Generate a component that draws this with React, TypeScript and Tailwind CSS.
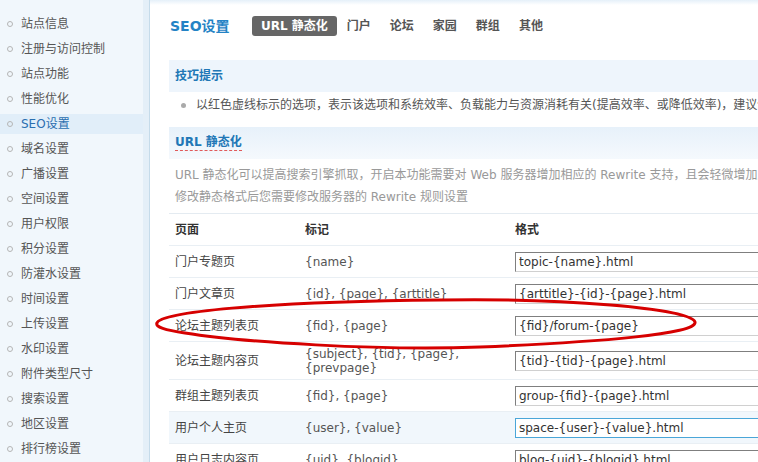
import React from "react";

const FONT = { fontFamily: '"DejaVu Sans", "Noto Sans CJK SC", sans-serif' };

const menu = [
  "站点信息",
  "注册与访问控制",
  "站点功能",
  "性能优化",
  "SEO设置",
  "域名设置",
  "广播设置",
  "空间设置",
  "用户权限",
  "积分设置",
  "防灌水设置",
  "时间设置",
  "上传设置",
  "水印设置",
  "附件类型尺寸",
  "搜索设置",
  "地区设置",
  "排行榜设置",
];

const tabs = ["门户", "论坛", "家园", "群组", "其他"];

interface Row {
  page: string;
  tags: string[];
  format: string;
  tall?: boolean;
  hover?: boolean;
}

const rows: Row[] = [
  { page: "门户专题页", tags: ["{name}"], format: "topic-{name}.html" },
  { page: "门户文章页", tags: ["{id}, {page}, {arttitle}"], format: "{arttitle}-{id}-{page}.html" },
  { page: "论坛主题列表页", tags: ["{fid}, {page}"], format: "{fid}/forum-{page}" },
  {
    page: "论坛主题内容页",
    tags: ["{subject}, {tid}, {page},", "{prevpage}"],
    format: "{tid}-{tid}-{page}.html",
    tall: true,
  },
  { page: "群组主题列表页", tags: ["{fid}, {page}"], format: "group-{fid}-{page}.html" },
  { page: "用户个人主页", tags: ["{user}, {value}"], format: "space-{user}-{value}.html", hover: true },
  { page: "用户日志内容页", tags: ["{uid}, {blogid}"], format: "blog-{uid}-{blogid}.html" },
];

const Sidebar: React.FC = () => (
  <div className="flex shrink-0">
    <div className="w-[143px] bg-[#f1f7fc] pt-[14px]">
      {menu.map((m) => {
        const active = m === "SEO设置";
        return (
          <div
            key={m}
            className={`flex h-[20px] mb-[5px] items-center text-[12px] ${
              active ? "bg-[#e1eef9] text-[#2a6fb0]" : "text-[#555]"
            }`}
          >
            <span className="shrink-0 ml-[7px] mr-[8px] w-[6px] h-[6px] rounded-full border border-[#b5b5b5]" />
            <span>{m}</span>
          </div>
        );
      })}
    </div>
    <div className="w-[7px] bg-[#e4eff8] border-r border-[#c5dbea]" />
  </div>
);

const FormatInput: React.FC<{ value: string; focus?: boolean }> = ({ value, focus }) => (
  <input
    readOnly
    defaultValue={value}
    style={FONT}
    className={`w-[280px] h-[20px] px-[3px] text-[12px] text-[#333] bg-white outline-none border ${
      focus
        ? "border-[#4aa6d8]"
        : "border-t-[#7f7f7f] border-l-[#7f7f7f] border-b-[#d0d0d0] border-r-[#d0d0d0]"
    }`}
  />
);

export default function App() {
  return (
    <div className="relative flex w-[758px] h-[462px] overflow-hidden bg-white" style={FONT}>
      <Sidebar />

      <div className="flex-1 overflow-hidden bg-gradient-to-b from-[#e5f0f9] via-white to-white bg-[length:100%_10px] bg-no-repeat">
        <div className="w-[700px] pl-[19px] whitespace-nowrap">
          {/* header + tabs */}
          <div className="flex items-center pt-[16px] h-[36px]">
            <div className="w-[83px] pl-[1px] text-[14px] font-bold text-[#2483c5]">SEO设置</div>
            <div className="flex items-center gap-[1px] text-[12px] font-bold">
              <span className="h-[20px] leading-[20px] px-[9px] rounded-[3px] bg-[#666] text-white">URL 静态化</span>
              {tabs.map((t) => (
                <span key={t} className="h-[20px] leading-[20px] px-[9px] text-[#555]">
                  {t}
                </span>
              ))}
            </div>
          </div>

          {/* tips */}
          <div className="mt-[24px] h-[32px] flex items-center pl-[6px] bg-[#eef5fc] text-[12px] font-bold text-[#2177b6]">
            技巧提示
          </div>
          <div className="h-[26px] flex items-center text-[12px] text-[#555]">
            <span className="shrink-0 ml-[12px] mr-[10px] w-[5px] h-[5px] rounded-full bg-[#aaa]" />
            <span>以红色虚线标示的选项，表示该选项和系统效率、负载能力与资源消耗有关(提高效率、或降低效率)，建议依自身服务器情况进行调整。</span>
          </div>

          {/* url static section */}
          <div className="mt-[9px] h-[32px] flex items-center pl-[6px] bg-gradient-to-b from-[#e7f1fa] to-[#f5f9fd]">
            <span className="text-[12px] font-bold text-[#2177b6] border-b border-dashed border-[#e05a5a] leading-[15px]">
              URL 静态化
            </span>
          </div>
          <div className="mt-[5px] pl-[6px] text-[12px] leading-[22px] text-[#999]">
            <div>URL 静态化可以提高搜索引擎抓取，开启本功能需要对 Web 服务器增加相应的 Rewrite 支持，且会轻微增加服务器负担。</div>
            <div>修改静态格式后您需要修改服务器的 Rewrite 规则设置</div>
          </div>

          {/* table */}
          <div className="mt-[5px] text-[12px]">
            <div className="grid grid-cols-[136px_210px_1fr] items-center h-[32px] border-t border-[#e4ebf1] font-bold text-[#333]">
              <div className="pl-[6px]">页面</div>
              <div>标记</div>
              <div>格式</div>
            </div>
            {rows.map((r) => (
              <div
                key={r.page}
                className={`grid grid-cols-[136px_210px_1fr] items-center border-t border-[#e9eff4] ${
                  r.tall ? "h-[38px]" : "h-[32px]"
                } ${r.hover ? "bg-[#f1f7fc]" : ""}`}
              >
                <div className="pl-[6px] text-[#444]">{r.page}</div>
                <div className="text-[#555] leading-[14px]">
                  {r.tags.map((t) => (
                    <div key={t}>{t}</div>
                  ))}
                </div>
                <div>
                  <FormatInput value={r.format} focus={r.hover} />
                </div>
              </div>
            ))}
          </div>
        </div>
      </div>

      {/* hand-drawn red highlight */}
      <svg className="absolute inset-0 pointer-events-none" width="758" height="462" viewBox="0 0 758 462">
        <path
          d="M157 323 C160 312 260 302 440 300 C560 298 690 308 695 322 C698 334 600 342 480 347 C380 351 240 342 185 333 C165 330 155 327 157 323 Z"
          fill="none"
          stroke="#d60000"
          strokeWidth="3"
        />
      </svg>
    </div>
  );
}
